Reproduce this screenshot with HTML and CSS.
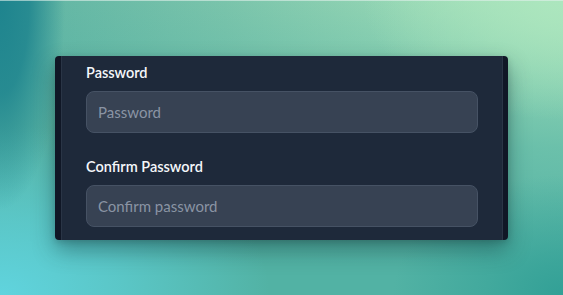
FILE: index.html
```html
<!DOCTYPE html>
<html lang="en">
<head>
<meta charset="utf-8">
<title>Password form</title>
<link rel="stylesheet" href="styles.css">
</head>
<body>
  <div class="stage">
    <div class="card">
      <div class="panel">
        <div class="field">
          <label class="label" for="pw">Password</label>
          <input class="input" id="pw" type="password" placeholder="Password">
        </div>
        <div class="field">
          <label class="label" for="cpw">Confirm Password</label>
          <input class="input" id="cpw" type="password" placeholder="Confirm password">
        </div>
      </div>
    </div>
  </div>
</body>
</html>
```
FILE: styles.css
```css
html, body {
  margin: 0;
  padding: 0;
}
body {
  width: 563px;
  height: 295px;
  overflow: hidden;
  font-family: Lato, "Noto Sans", sans-serif;
  border-top: 1px solid rgba(225, 240, 235, 0.6);
  box-sizing: border-box;
  background:
    radial-gradient(ellipse 65px 210px at 0% 0%, rgba(30, 132, 142, 1) 0%, rgba(30, 132, 142, 0.85) 45%, rgba(30, 132, 142, 0) 100%),
    radial-gradient(ellipse 270px 170px at 0% 100%, rgba(96, 212, 222, 1) 0%, rgba(96, 212, 222, 0.6) 45%, rgba(96, 212, 222, 0) 100%),
    radial-gradient(ellipse 170px 120px at 100% 100%, rgba(50, 160, 150, 1) 0%, rgba(50, 160, 150, 0.5) 45%, rgba(50, 160, 150, 0) 100%),
    radial-gradient(ellipse 200px 120px at 100% 0%, rgba(172, 230, 190, 1) 0%, rgba(172, 230, 190, 0) 100%),
    linear-gradient(to bottom, rgba(82, 178, 164, 0) 0%, rgba(82, 178, 164, 0.7) 50%, rgba(82, 178, 164, 1) 90%),
    linear-gradient(to right, #5db3a3 0%, #7ac4ab 40%, #98d8b5 75%, #a8e2ba 100%);
}
.stage {
  padding: 55px 55px 0 55px;
}
.card {
  width: 453px;
  height: 184px;
  display: flex;
  background: #101726;
  border-radius: 4px;
  box-shadow: 0 10px 22px rgba(10, 45, 50, 0.42), 0 2px 6px rgba(0, 0, 0, 0.15);
  overflow: hidden;
}
.panel {
  margin: 0 5px 0 6px;
  flex: 1;
  background: #1e293a;
  border-left: 1px solid #2a3546;
  border-right: 1px solid #2a3546;
  padding: 7px 24px 13px 24px;
}
.field {
  display: flex;
  flex-direction: column;
}
.field + .field {
  margin-top: 24px;
}
.label {
  color: #f5f7fa;
  font-size: 14.5px;
  font-weight: 600;
  line-height: 20px;
  margin-bottom: 8px;
}
.input {
  box-sizing: border-box;
  height: 42px;
  width: 100%;
  margin: 0;
  padding: 0 11px;
  background: #374253;
  border: 1px solid #465264;
  border-radius: 8px;
  color: #e5e7eb;
  font-family: Lato, "Noto Sans", sans-serif;
  font-size: 15px;
  outline: none;
}
.input::placeholder {
  color: #8a94a4;
  opacity: 1;
}
```
